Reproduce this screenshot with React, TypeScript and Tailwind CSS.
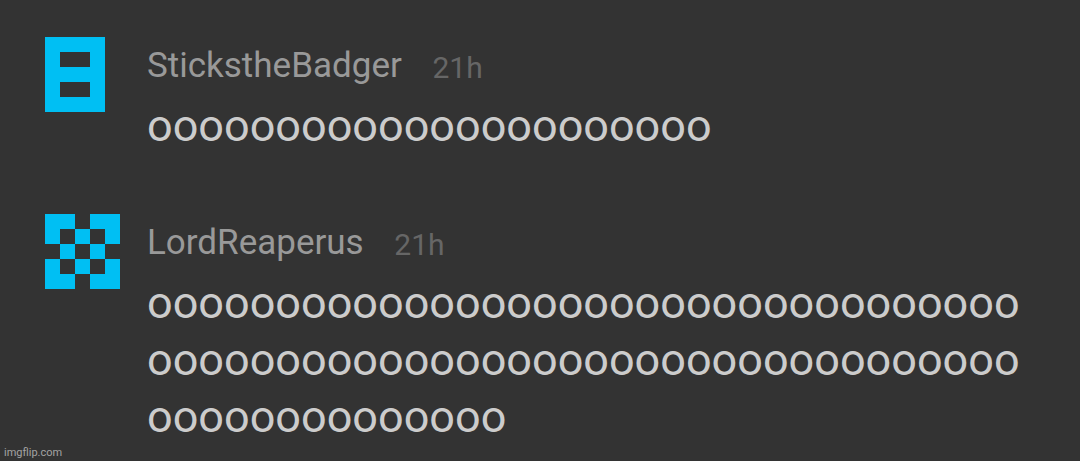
interface Comment {
  author: string
  time: string
  lines: string[]
  avatar: string[]
}

const comments: Comment[] = [
  {
    author: 'StickstheBadger',
    time: '21h',
    lines: ['oooooooooooooooooooooo'],
    avatar: ['####.', '#..#.', '####.', '#..#.', '####.'],
  },
  {
    author: 'LordReaperus',
    time: '21h',
    lines: [
      'oooooooooooooooooooooooooooooooooo',
      'oooooooooooooooooooooooooooooooooo',
      'oooooooooooooo',
    ],
    avatar: ['##.##', '#.#.#', '.#.#.', '#.#.#', '##.##'],
  },
]

function Avatar({ rows }: { rows: string[] }) {
  return (
    <svg
      viewBox="0 0 5 5"
      shapeRendering="crispEdges"
      className="h-[75px] w-[75px] shrink-0 fill-[#00bff3]"
    >
      {rows.map((row, y) =>
        row.split('').map((cell, x) =>
          cell === '#' ? <rect key={`${x}-${y}`} x={x} y={y} width="1" height="1" /> : null,
        ),
      )}
    </svg>
  )
}

function CommentItem({ comment }: { comment: Comment }) {
  return (
    <article className="flex gap-[27px]">
      <Avatar rows={comment.avatar} />
      <div className="min-w-0 flex-1">
        <header className="flex h-[60px] items-start gap-[30.6px] pt-[7px]">
          <h2 className="pt-px text-[35px] leading-[42px] text-[#999999]">{comment.author}</h2>
          <time className="pt-1 text-[30px] leading-[40px] text-[#666666]">{comment.time}</time>
        </header>
        <div className="text-[45px] leading-[57px] whitespace-nowrap text-[#cccccc]">
          {comment.lines.map((line, idx) => (
            <p key={idx}>{line}</p>
          ))}
        </div>
      </div>
    </article>
  )
}

export default function App() {
  return (
    <main className="flex h-[461px] w-[1080px] flex-col justify-between overflow-hidden bg-[#333333] font-['Roboto',sans-serif]">
      <div className="flex flex-col gap-[60px] pt-[37px] pl-[45px]">
        {comments.map((comment) => (
          <CommentItem key={comment.author} comment={comment} />
        ))}
      </div>
      <footer className="-mt-4 pb-px pl-1 text-[11px] leading-[15px] text-[#a3a3a3]">imgflip.com</footer>
    </main>
  )
}
